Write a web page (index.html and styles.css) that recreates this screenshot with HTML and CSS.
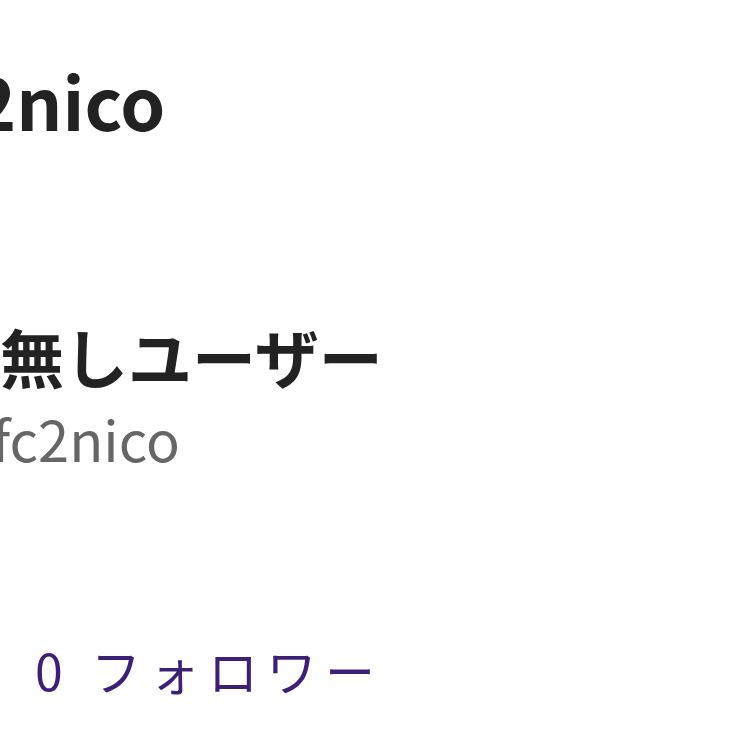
FILE: index.html
```html
<!DOCTYPE html>
<html lang="ja">
<head>
    <meta charset="UTF-8">
    <meta name="viewport" content="width=device-width, initial-scale=1.0">
    <title>fc2nico</title>
    <link rel="stylesheet" href="styles.css">
</head>
<body>
    <div class="profile">
        <h1 class="title">fc2nico</h1>
        <div class="user">
            <p class="name">名無しユーザー</p>
            <p class="handle">@fc2nico</p>
        </div>
        <div class="stats">
            <a class="followers" href="#">0 フォロワー</a>
        </div>
    </div>
</body>
</html>
```

FILE: styles.css
```css
html, body {
    margin: 0;
    padding: 0;
    background-color: #fff;
    overflow: hidden;
}
body {
    font-family: "Noto Sans CJK JP", "Noto Sans", sans-serif;
    color: #222;
}
.profile {
    display: flex;
    flex-direction: column;
    width: 1000px;
}
.title {
    margin: 0 0 0 -90px;
    padding-top: 64px;
    font-size: 72px;
    font-weight: 700;
    line-height: 1;
}
.user {
    margin-top: 187px;
}
.name {
    margin: 0 0 0 -64px;
    font-size: 64px;
    font-weight: 700;
    line-height: 1;
}
.handle {
    margin: 23px 0 0 -61px;
    font-size: 56px;
    color: #666;
    line-height: 1;
}
.stats {
    margin-top: 167px;
    padding-left: 35px;
}
.followers {
    font-size: 50px;
    color: #3d1f75;
    text-decoration: none;
    letter-spacing: 0.17em;
}
```
